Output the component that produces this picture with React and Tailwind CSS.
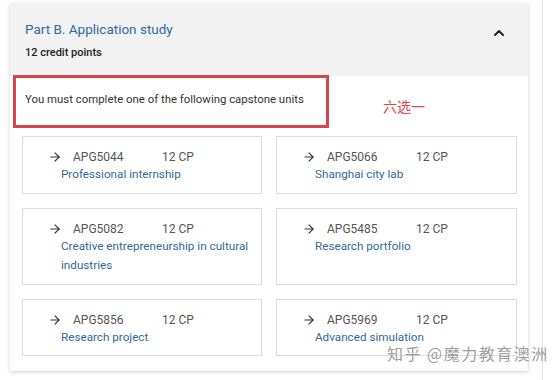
import React from 'react';
import { ArrowRight, ChevronUp } from 'lucide-react';

const units = [
  { code: 'APG5044', name: 'Professional internship' },
  { code: 'APG5066', name: 'Shanghai city lab' },
  { code: 'APG5082', name: 'Creative entrepreneurship in cultural industries' },
  { code: 'APG5485', name: 'Research portfolio' },
  { code: 'APG5856', name: 'Research project' },
  { code: 'APG5969', name: 'Advanced simulation' }
];

function UnitCard({ unit }) {
  return (
    <div className="border border-[#dcdcdc] bg-white pl-[38px] pr-[4px] pt-[12px]">
      <div className="flex items-center -ml-[12px] h-[16px] text-[12px] text-[#555]">
        <ArrowRight size={14} strokeWidth={2} className="-ml-[1px] text-[#333]" />
        <span className="ml-[11px] w-[89px]">{unit.code}</span>
        <span>12 CP</span>
      </div>
      <div className="text-[11.7px] leading-[19px] text-[#31699b]">{unit.name}</div>
    </div>
  );
}

export default function App() {
  return (
    <div className="relative w-[554px] h-[380px] bg-white overflow-hidden flex items-start pt-[3px] pl-[10px] font-['Roboto','Liberation_Sans',sans-serif]">
      {/* Panel */}
      <div className="w-[518px] bg-white shadow-[0_1px_4px_rgba(0,0,0,0.18)]">
        {/* Header */}
        <div className="h-[73px] bg-[#f2f2f2] flex justify-between pl-[15px] pr-[21px] pt-[17px]">
          <div>
            <div className="text-[13.5px] leading-[18px] text-[#2f6aa3]">Part B. Application study</div>
            <div className="mt-[8px] text-[11px] leading-[14px] font-medium text-[#222]">12 credit points</div>
          </div>
          <ChevronUp size={16} strokeWidth={3} className="mt-[5px] text-[#222]" />
        </div>

        {/* Body */}
        <div className="px-[12px] pb-[15px]">
          <div className="flex items-start -mt-[1px]">
            <div className="-ml-[9px] w-[316px] h-[53px] border-[3px] border-[#d9434b] flex items-center pl-[9px] pb-[3px] text-[11.4px] text-[#333]">
              You must complete one of the following capstone units
            </div>
            <div className="ml-[54px] mt-[23px] text-[14px] leading-[16px] text-[#e0474c] font-['Noto_Sans_CJK_SC',sans-serif]">
              六选一
            </div>
          </div>

          <div className="mt-[8px] grid grid-cols-[240px_241px] grid-rows-[58px_77px_57px] gap-x-[14px] gap-y-[14px]">
            {units.map((u) => (
              <UnitCard key={u.code} unit={u} />
            ))}
          </div>
        </div>
      </div>

      <div className="ml-[14px] -mt-[3px] h-[380px] w-px bg-[#e4e4e4]" />

      {/* Watermark */}
      <div className="absolute left-[387px] top-[342px] text-[16px] leading-[22px] text-[#a0a0a0] font-['Noto_Sans_CJK_SC',sans-serif] tracking-[1.5px]">
        知乎 @魔力教育澳洲
      </div>
    </div>
  );
}
